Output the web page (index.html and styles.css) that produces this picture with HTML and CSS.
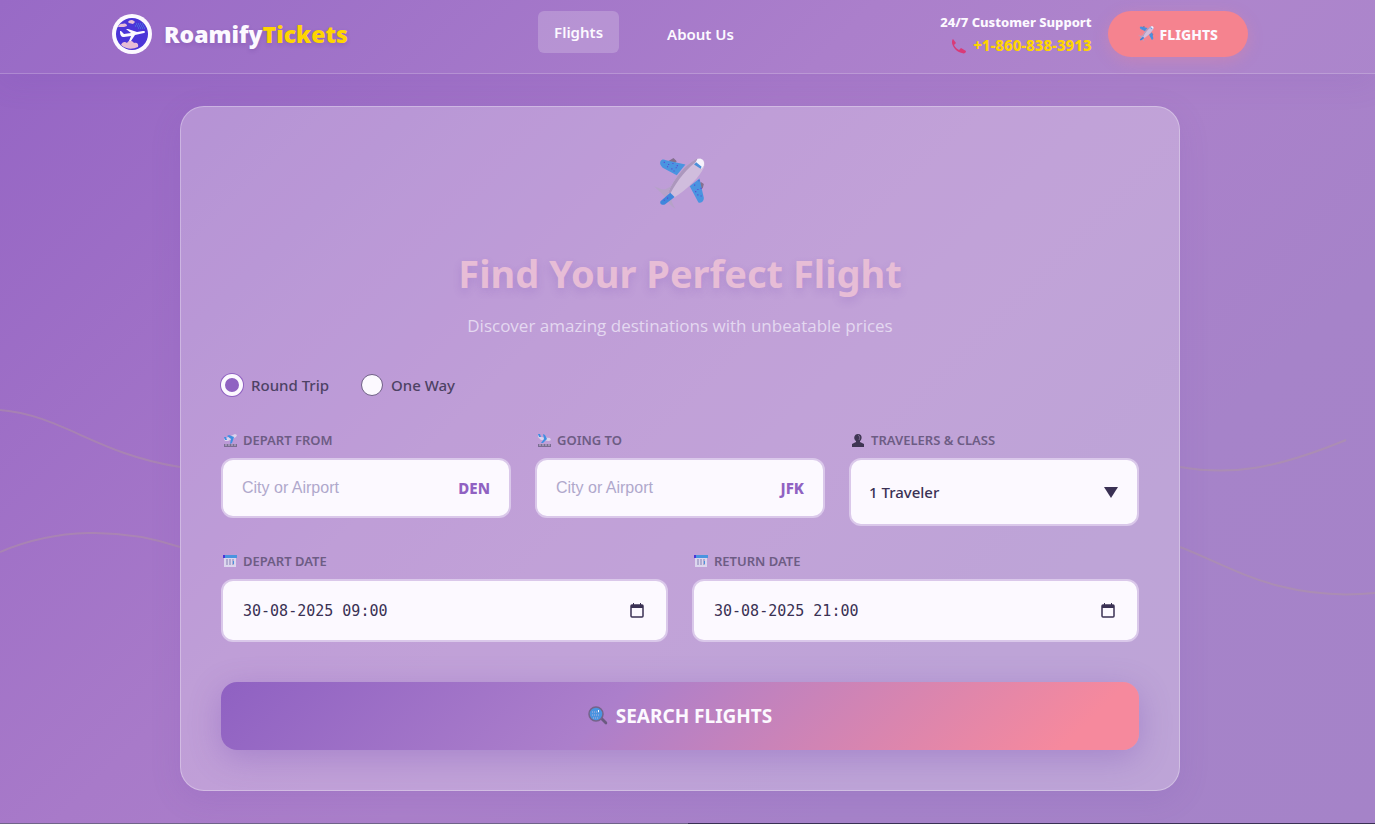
FILE: index.html
```html
<!DOCTYPE html>
<html lang="en">
<head>
  <meta charset="UTF-8">
  <meta name="viewport" content="width=device-width, initial-scale=1.0">
  <title>RoamifyTickets</title>
  <link rel="stylesheet" href="styles.css">
</head>
<body>
  <!-- Shared icons -->
  <svg class="sprite" aria-hidden="true">
    <symbol id="plane" viewBox="0 0 48 48">
      <path d="M13 3l5-3 3 3-3 3zM43 22l3 2-1 4-4 1z" fill="#85708f"/>
      <path d="M6 3c1-2 3-2 5-1l18 4-8 10L8 9C6 7 5 5 6 3z" fill="#4a94e0"/>
      <path d="M42 19l4 18c0 3-2 5-5 4L33 26z" fill="#4a94e0"/>
      <path d="M0 26c3 1 6 3 10 3l6-3 5 5-5 6c0 4 2 7 4 10-4-2-7-6-9-10-3-4-7-7-11-11z" fill="#b6a2c8"/>
      <path d="M39 1c6-2 9 2 7 8-3 7-15 20-28 28l-5-5C19 18 29 6 39 1z" fill="#d0bddd"/>
      <path d="M39 1C29 6 19 18 13 32l2 1C22 20 30 10 42 1z" fill="#ac97bd"/>
      <path d="M40 1c4-1 7 1 6 6l-2 3-6-5z" fill="#f7f3fc"/>
      <path d="M39 4l5 4-1 2-6-4z" fill="#4a8fd9"/>
      <path d="M15 32l4 4-9 7c-3 1-5-1-4-3z" fill="#3f86dc"/>
      <path d="M9 4h1m3 2h1m3-1h1m3 2h1M12 8h1m3 2h1m3-1h1m-3 3h1M37 25h1m2 4h1m-3 2h1m1 3h1m2-6h1m-1 7h1m-3-14h1M9 39h1m2-2h1" stroke="#5a45cf"/>
    </symbol>
    <symbol id="calendar" viewBox="0 0 14 14">
      <path d="M1 3h12v10H1z" fill="#dcd6ee"/>
      <path d="M0 1h14v3H0z" fill="#4a94e0"/>
      <path d="M0 1h2v3H0z" fill="#4b35d8"/>
      <path d="M3 6h8M3 8h8M3 10h8" stroke="#8580b4" stroke-dasharray="2 1"/>
      <path d="M10 7h1v3h-1z" fill="#4a94e0"/>
    </symbol>
    <symbol id="date-picker" viewBox="0 0 16 16">
      <rect x="2" y="2" width="12" height="12" rx="1" fill="none" stroke="#3a3154" stroke-width="1.5"/>
      <path d="M2 2h12v3H2zM4 0h1v2H4zM11 0h1v2h-1z" fill="#3a3154"/>
    </symbol>
  </svg>

  <svg class="waves" viewBox="0 0 1375 824" preserveAspectRatio="none" aria-hidden="true">
    <path d="M0 410C62 415 96 454 180 467"/>
    <path d="M0 552C56 528 120 527 180 547"/>
    <path d="M1180 467C1232 476 1275 469 1346 440"/>
    <path d="M1180 547C1230 566 1280 602 1375 593"/>
  </svg>

  <header class="header">
    <div class="header-inner">
      <a class="logo" href="#">
        <svg class="logo-mark" viewBox="0 0 40 40" aria-hidden="true">
          <circle cx="20" cy="20" r="20" fill="#fcf9ff"/>
          <circle cx="20" cy="20" r="16" fill="#4b35d8"/>
          <path d="M6 13c1-3 4-4 5-3 2-1 4 0 4 2l-3 1H6zM16 8c1-2 4-3 6-1l1 1-2 2-4-1z" fill="#e7bdd6"/>
          <path d="M9 31c1-3 4-4 6-2 2-4 6-2 7 0 3-1 5 1 4 4a16 16 0 0 1-17-2z" fill="#e7bdd6"/>
          <path d="M24 10h8M23 12h10M26 14h8" fill="none" stroke="#4a94e0" stroke-dasharray="1 1"/>
          <path d="M8 17l1 0 3 3 7-1-5-4h2l9 3 6-1c2 0 3 1 1 2l-9 2-4 6h-2l2-5-7 1c-3 0-4-2-4-6z" fill="#fcf9ff"/>
        </svg>
        <span class="logo-text">Roamify<span class="accent">Tickets</span></span>
      </a>
      <nav class="nav">
        <a class="nav-link active" href="#">Flights</a>
        <a class="nav-link" href="#">About Us</a>
      </nav>
      <div class="header-right">
        <div class="support">
          <span>24/7 Customer Support</span>
          <a class="phone" href="tel:+18608383913">
            <svg class="phone-icon" viewBox="0 0 16 16" aria-hidden="true">
              <path d="M2 1l3 4-2 2c1 2 3 4 5 5l2-2 5 3c0 2-2 3-4 2C6 14 2 10 1 5c0-2 0-3 1-4z" fill="#d93a77"/>
            </svg>
            +1-860-838-3913
          </a>
        </div>
        <button class="cta" type="button">
          <svg class="cta-icon" aria-hidden="true"><use href="#plane"/></svg>
          FLIGHTS
        </button>
      </div>
    </div>
  </header>

  <main class="main">
    <form class="card">
      <div class="hero-icon"><svg aria-hidden="true"><use href="#plane"/></svg></div>
      <h1>Find Your Perfect Flight</h1>
      <p class="subtitle">Discover amazing destinations with unbeatable prices</p>

      <div class="trip-type">
        <label><input type="radio" name="trip" checked> Round Trip</label>
        <label><input type="radio" name="trip"> One Way</label>
      </div>

      <div class="row places">
        <div class="field">
          <label for="from">
            <svg viewBox="0 0 14 14" aria-hidden="true">
              <path d="M1 11h13v3H1z" fill="#7b6d92"/>
              <path d="M2 12h2m1 0h2m1 0h2m1 0h2" stroke="#c4b7d6"/>
              <path d="M1 6l11-5 2 1-1 2L5 8H2z" fill="#dcd3ec"/>
              <path d="M4 3l2-1 5 2-2 6-2 1 1-5zM1 4l2 0 1 3-2 0z" fill="#3f8fe2"/>
            </svg>
            DEPART FROM
          </label>
          <div class="input-box">
            <input type="text" id="from" placeholder="City or Airport">
            <span class="code">DEN</span>
          </div>
        </div>
        <div class="field">
          <label for="to">
            <svg viewBox="0 0 14 14" aria-hidden="true">
              <path d="M1 11h13v3H1z" fill="#7b6d92"/>
              <path d="M2 12h2m1 0h2m1 0h2m1 0h2" stroke="#c4b7d6"/>
              <path d="M1 2l3 2 9 1 1 2-2 1-8-1-3-3z" fill="#dcd3ec"/>
              <path d="M1 1l2 0 1 3-2 0zM6 1l2 1 2 4-4 4-2 0 3-4z" fill="#3f8fe2"/>
            </svg>
            GOING TO
          </label>
          <div class="input-box">
            <input type="text" id="to" placeholder="City or Airport">
            <span class="code">JFK</span>
          </div>
        </div>
        <div class="field">
          <label for="travelers">
            <svg viewBox="0 0 14 14" aria-hidden="true">
              <path d="M7 1c5 0 4 6 2 7v1l4 2v3H1v-3l4-2V8C2 6 3 1 7 1z" fill="#3f3653"/>
              <path d="M7 2c2 1 2 3 1 5" fill="none" stroke="#7a6a8e"/>
            </svg>
            TRAVELERS &amp; CLASS
          </label>
          <div class="input-box">
            <select id="travelers">
              <option>1 Traveler</option>
              <option>2 Travelers</option>
            </select>
            <svg class="arrow" viewBox="0 0 14 12" aria-hidden="true"><path d="M0 1h14L7 12z" fill="#3a3154"/></svg>
          </div>
        </div>
      </div>

      <div class="row dates">
        <div class="field">
          <label for="departDate"><svg aria-hidden="true"><use href="#calendar"/></svg> DEPART DATE</label>
          <div class="input-box">
            <input class="date" type="text" id="departDate" value="30-08-2025 09:00">
            <button class="picker" type="button" aria-label="Pick depart date"><svg><use href="#date-picker"/></svg></button>
          </div>
        </div>
        <div class="field">
          <label for="returnDate"><svg aria-hidden="true"><use href="#calendar"/></svg> RETURN DATE</label>
          <div class="input-box">
            <input class="date" type="text" id="returnDate" value="30-08-2025 21:00">
            <button class="picker" type="button" aria-label="Pick return date"><svg><use href="#date-picker"/></svg></button>
          </div>
        </div>
      </div>

      <button class="search-btn" type="submit">
        <svg viewBox="0 0 20 20" aria-hidden="true">
          <path d="M12 13l2-2 5 5c1 2-1 3-2 2z" fill="#6b5a80"/>
          <circle cx="8" cy="8" r="7" fill="#4a94e0" stroke="#75638a" stroke-width="1.5"/>
          <path d="M4 6h8M4 9h8M5 12h6" stroke="#b7b3dc" stroke-dasharray="1 1"/>
          <path d="M10 4h1v2h-1z" fill="#fff"/>
        </svg>
        SEARCH FLIGHTS
      </button>
    </form>
  </main>

  <footer class="footer"></footer>
</body>
</html>
```
FILE: styles.css
```css
* {
  box-sizing: border-box;
}

body {
  margin: 0;
  min-height: 100vh;
  font-family: "Noto Sans", "Open Sans", sans-serif;
  color: #3a3154;
  background: linear-gradient(135deg, #9464c4 0%, #a87ac9 40%, #ab80ca 55%, #a683c9 75%, #a583c8 100%);
}

a {
  color: inherit;
  text-decoration: none;
}

button {
  border: none;
  font-family: inherit;
  color: #fcf9ff;
  cursor: pointer;
}

.sprite {
  position: absolute;
  width: 0;
  height: 0;
}

.waves {
  position: absolute;
  top: 0;
  left: 0;
  width: 100%;
  height: 100vh;
  fill: none;
  stroke: rgba(180, 158, 150, 0.4);
  stroke-width: 2;
}

/* Header */
.header {
  position: relative;
  padding: 11px 15px 16px 0;
  background: rgba(255, 255, 255, 0.04);
  border-bottom: 1px solid rgba(255, 255, 255, 0.2);
  box-shadow: 0 8px 32px rgba(110, 65, 175, 0.1);
}

.header-inner {
  display: flex;
  justify-content: space-between;
  align-items: center;
  max-width: 1200px;
  margin: 0 auto;
  padding: 0 32px;
}

.logo {
  display: flex;
  align-items: center;
  gap: 12px;
}

.logo-mark {
  width: 40px;
  height: 40px;
}

.logo-text {
  font-size: 23px;
  font-weight: 900;
  color: #fcf9ff;
  text-shadow: 0 2px 4px rgba(80, 40, 130, 0.2);
}

.accent {
  color: #ffd500;
}

.nav {
  display: flex;
  gap: 32px;
}

.nav-link {
  padding: 10px 16px;
  border-radius: 6px;
  font-size: 15px;
  font-weight: 600;
  line-height: 22px;
  color: #fcf9ff;
}

.nav-link.active {
  background: rgba(255, 255, 255, 0.2);
  transform: translateY(-2px);
}

.header-right {
  display: flex;
  align-items: center;
  gap: 16px;
}

.support {
  display: flex;
  flex-direction: column;
  align-items: flex-end;
  font-size: 13px;
  font-weight: 800;
  line-height: 23px;
  color: #fcf9ff;
}

.phone {
  display: flex;
  align-items: center;
  gap: 6px;
  font-size: 15px;
  color: #ffd500;
}

.phone-icon {
  width: 16px;
  height: 16px;
}

.cta {
  display: flex;
  align-items: center;
  gap: 6px;
  height: 46px;
  padding: 0 30px;
  border-radius: 23px;
  background: #f5838f;
  font-size: 14px;
  font-weight: 800;
  box-shadow: 0 4px 15px rgba(245, 131, 143, 0.3);
}

.cta-icon {
  width: 16px;
  height: 16px;
}

/* Search card */
.main {
  position: relative;
  padding: 32px 15px 32px 0;
}

.card {
  max-width: 1000px;
  margin: 0 auto;
  padding: 40px;
  border: 1px solid rgba(255, 255, 255, 0.3);
  border-radius: 24px;
  background: rgba(255, 255, 255, 0.27);
  box-shadow: 0 8px 32px rgba(110, 65, 175, 0.12);
}

.hero-icon {
  display: flex;
  justify-content: center;
  align-items: center;
  height: 74px;
  margin-bottom: 30px;
}

.hero-icon svg {
  width: 52px;
  height: 52px;
}

h1 {
  margin: 0 0 16px;
  font-size: 38px;
  font-weight: 700;
  line-height: 44px;
  text-align: center;
  color: #e7bdd6;
  text-shadow: 0 4px 8px rgba(110, 65, 175, 0.2);
}

.subtitle {
  margin: 0 0 32px;
  font-family: "Open Sans", "Noto Sans", sans-serif;
  font-size: 17px;
  line-height: 29px;
  text-align: center;
  color: #e4d8f0;
}

.trip-type {
  display: flex;
  gap: 32px;
  margin-bottom: 32px;
}

.trip-type label {
  display: flex;
  align-items: center;
  gap: 8px;
  height: 26px;
  font-size: 15px;
  font-weight: 500;
  color: #4d4264;
}

.trip-type input {
  appearance: none;
  width: 22px;
  height: 22px;
  margin: 0;
  border: 1px solid #6f5f86;
  border-radius: 50%;
  background: #fcf9ff;
}

.trip-type input:checked {
  border: 4px solid #fcf9ff;
  background: #9062c2;
  box-shadow: 0 0 0 1px #9062c2;
}

.row {
  display: grid;
  gap: 24px;
}

.places {
  grid-template-columns: repeat(3, 1fr);
  align-items: start;
  margin-bottom: 25px;
}

.dates {
  grid-template-columns: repeat(2, 1fr);
  margin-bottom: 40px;
}

.field label {
  display: flex;
  align-items: center;
  gap: 6px;
  margin: 0 0 8px 2px;
  font-size: 13px;
  font-weight: 600;
  line-height: 20px;
  color: #6d5c84;
}

.field label svg {
  width: 14px;
  height: 14px;
}

.input-box {
  position: relative;
}

.input-box input,
.input-box select {
  display: block;
  width: 100%;
  height: 60px;
  padding: 0 19px;
  border: 2px solid #dac8ea;
  border-radius: 12px;
  background: #fcf9ff;
  font-family: "Liberation Sans", Arial, sans-serif;
  font-size: 16px;
  color: #3a3154;
}

.input-box input::placeholder {
  color: #b0a8cc;
}

.input-box select {
  appearance: none;
  height: 68px;
  padding: 0 18px;
  font-family: "Noto Sans", "Open Sans", sans-serif;
  font-size: 15px;
  font-weight: 500;
}

.input-box .date {
  height: 63px;
  padding: 0 20px;
  font-family: "DejaVu Sans Mono", monospace;
  font-size: 15px;
}

/* Airport code, arrow and picker sit over the right end of the box */
.code,
.arrow,
.picker {
  position: absolute;
  top: 0;
  bottom: 0;
  right: 21px;
  margin: auto 0;
}

.code {
  height: 20px;
  font-size: 15px;
  font-weight: 800;
  line-height: 20px;
  color: #9062c2;
}

.arrow {
  width: 14px;
  height: 12px;
  pointer-events: none;
}

.picker {
  width: 16px;
  height: 16px;
  right: 23px;
  padding: 0;
  background: none;
}

.picker svg {
  display: block;
  width: 16px;
  height: 16px;
}

.search-btn {
  display: flex;
  justify-content: center;
  align-items: center;
  gap: 8px;
  width: 100%;
  height: 68px;
  border-radius: 16px;
  background: linear-gradient(135deg, #8f61c2 0%, #ac7fcb 42%, #f6899d 92%);
  font-size: 19px;
  font-weight: 700;
  box-shadow: 0 8px 32px rgba(110, 65, 175, 0.3);
}

.search-btn svg {
  width: 20px;
  height: 20px;
}

.footer {
  height: 1px;
  background: linear-gradient(90deg, #71648a 50%, #3a3154 50%);
}
```
